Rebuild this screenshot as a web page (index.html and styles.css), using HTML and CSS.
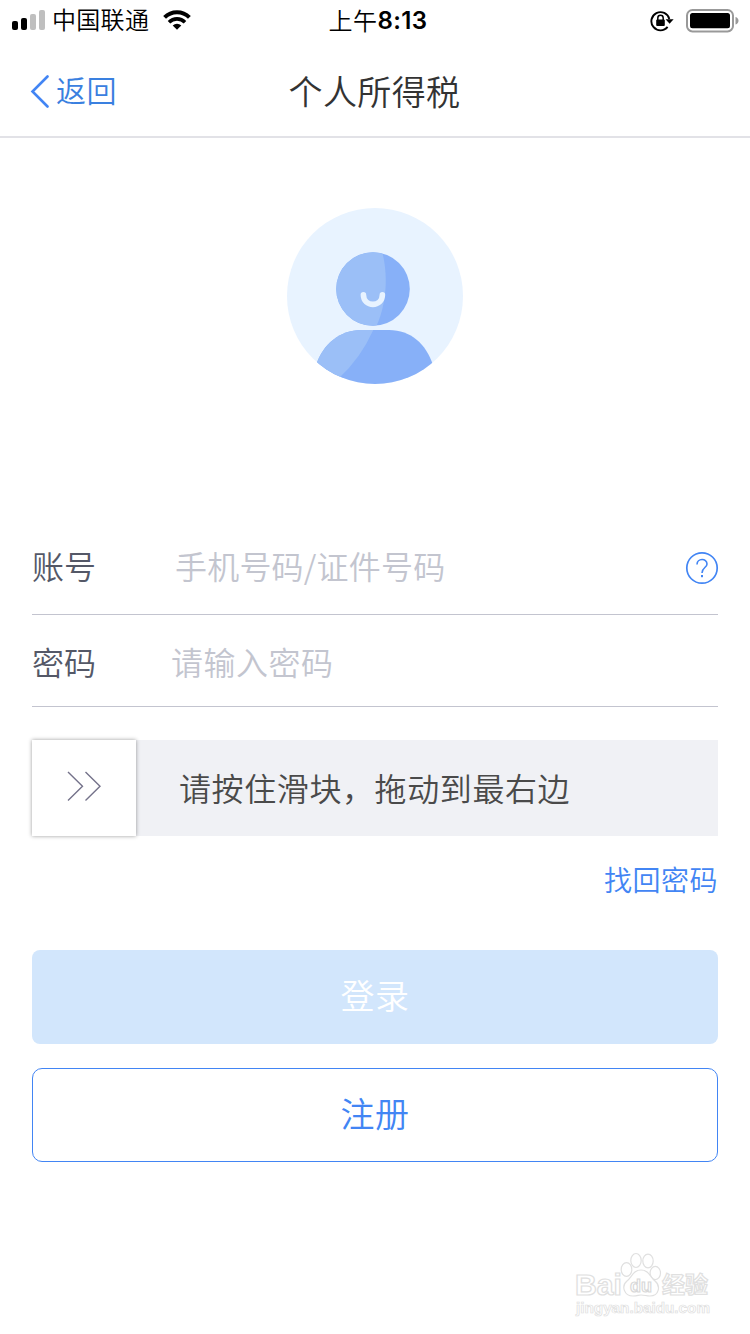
FILE: index.html
```html
<!DOCTYPE html>
<html lang="zh-CN">
<head>
    <meta charset="UTF-8">
    <title>个人所得税</title>
    <link rel="stylesheet" href="styles.css">
</head>
<body>

    <div class="status-bar">
        <div class="status-left">
            <svg class="signal" width="34" height="20" viewBox="0 0 34 20">
                <rect x="0" y="11" width="6" height="9" rx="2" fill="#000"/>
                <rect x="9" y="8" width="6" height="12" rx="2" fill="#000"/>
                <rect x="18" y="4" width="6" height="16" rx="2" fill="#bfbfbf"/>
                <rect x="27" y="0" width="6" height="20" rx="2" fill="#bfbfbf"/>
            </svg>
            <span class="carrier">中国联通</span>
            <svg class="wifi" width="28" height="20" viewBox="0 0 28 20">
                <path d="M1.6 7.3a17.6 17.6 0 0 1 24.8 0" fill="none" stroke="#000" stroke-width="4"/>
                <path d="M6 12.2a11.4 11.4 0 0 1 16 0" fill="none" stroke="#000" stroke-width="3.6"/>
                <path d="M9.7 15.6a6.2 6.2 0 0 1 8.6 0L14 19.8z" fill="#000"/>
            </svg>
        </div>
        <div class="clock">上午<b>8:13</b></div>
        <div class="status-right">
            <svg width="24" height="22" viewBox="0 0 24 22">
                <path d="M17.6 16.9A9.1 9.1 0 1 1 19.3 9" fill="none" stroke="#000" stroke-width="1.9"/>
                <path d="M15.6 9.2h8l-4 4.6z" fill="#000"/>
                <path d="M7.8 10V8a2.7 2.7 0 0 1 5.4 0v2" fill="none" stroke="#000" stroke-width="1.5"/>
                <rect x="6.2" y="9.5" width="8.6" height="6.4" rx="1" fill="#000"/>
            </svg>
            <svg width="53" height="24" viewBox="0 0 53 24">
                <rect x="1" y="1" width="46" height="21.4" rx="5.5" fill="none" stroke="#999" stroke-width="2"/>
                <rect x="4" y="4" width="40" height="15.2" rx="2.5" fill="#000"/>
                <path d="M49.5 8q3 1 3 3.8t-3 3.8z" fill="#999"/>
            </svg>
        </div>
    </div>

    <div class="navbar">
        <a class="back">
            <svg width="20" height="34" viewBox="0 0 20 34">
                <path d="M17.5 2.5L2.5 17.5l15 15" fill="none" stroke="#4285f4" stroke-width="2.6" stroke-linecap="round"/>
            </svg>
            <span>返回</span>
        </a>
        <h1>个人所得税</h1>
        <div class="nav-space"></div>
    </div>

    <div class="content">
        <svg class="avatar" width="176" height="176" viewBox="0 0 176 176">
            <defs>
                <clipPath id="circle"><circle cx="88" cy="88" r="88"/></clipPath>
                <clipPath id="head"><circle cx="86" cy="81" r="36.8"/></clipPath>
                <clipPath id="body"><path d="M29 157C36 136 53 122 74 122H102C124 122 139 136 146 157V180H29z"/></clipPath>
            </defs>
            <circle cx="88" cy="88" r="88" fill="#e8f3ff"/>
            <g clip-path="url(#circle)">
                <g clip-path="url(#head)">
                    <rect x="48" y="43" width="76" height="76" fill="#87b0f8"/>
                    <path d="M40 40H94C101 62 101 93 89 119H40z" fill="#9bbff7"/>
                </g>
                <g clip-path="url(#body)">
                    <rect x="20" y="120" width="140" height="60" fill="#87b0f8"/>
                    <path d="M20 118H88Q75 149 52 170L40 180H20z" fill="#9bbff7"/>
                </g>
            </g>
            <path d="M76.4 86.8C76.4 99.6 95.4 99.6 95.4 86.8" fill="none" stroke="#e8f3ff" stroke-width="5.6" stroke-linecap="round"/>
        </svg>

        <div class="field account">
            <label>账号</label>
            <input type="text" placeholder="手机号码/证件号码">
            <svg width="34" height="34" viewBox="0 0 34 34">
                <circle cx="17" cy="17" r="15.2" fill="none" stroke="#4285f4" stroke-width="1.7"/>
                <path d="M12 13.5C12 7 22 7 22 12.9C22 16.7 17 16.5 17 22" fill="none" stroke="#4285f4" stroke-width="1.6"/>
                <rect x="16" y="24" width="2" height="2.2" fill="#4285f4"/>
            </svg>
        </div>
        <div class="field password">
            <label>密码</label>
            <input type="password" placeholder="请输入密码">
        </div>

        <div class="slider">
            <div class="handle">
                <svg width="36" height="32" viewBox="0 0 36 32">
                    <path d="M2 2l14.5 14.2L2 30.5M19.5 2L34 16.2L19.5 30.5" fill="none" stroke="#74728a" stroke-width="1.4"/>
                </svg>
            </div>
            <span>请按住滑块，拖动到最右边</span>
        </div>

        <a class="forgot">找回密码</a>

        <button class="login">登录</button>
        <button class="register">注册</button>
    </div>

    <svg class="watermark" width="150" height="72" viewBox="0 0 150 72">
        <g class="outline">
            <text class="brand" x="5" y="45" textLength="47" lengthAdjust="spacingAndGlyphs">Bai</text>
            <ellipse cx="56.5" cy="19.5" rx="5.3" ry="6.8"/>
            <ellipse cx="66" cy="10.5" rx="5.2" ry="7"/>
            <ellipse cx="78" cy="11" rx="5.2" ry="6.8"/>
            <ellipse cx="85.3" cy="23" rx="5.2" ry="6.6"/>
            <path d="M71 20C63 20 62 27 57 31C51 36 54 46 63 46C68 46 68 45 71 45C75 45 76 46 80 46C89 46 91 36 85 31C80 27 79 20 71 20z"/>
            <text class="jingyan" x="92" y="43" textLength="46">经验</text>
            <text class="url" x="6" y="62.5" textLength="134" lengthAdjust="spacingAndGlyphs">jingyan.baidu.com</text>
        </g>
        <text class="du" x="60" y="42" textLength="22" lengthAdjust="spacingAndGlyphs">du</text>
    </svg>

</body>
</html>
```
FILE: styles.css
```css
* { box-sizing: border-box; }
body { margin: 0; height: 1334px; position: relative; background: #fff; font-family: "Noto Sans CJK SC", sans-serif; font-weight: 350; overflow: hidden; }

.status-bar { display: grid; grid-template-columns: 1fr auto 1fr; align-items: center; height: 40px; padding: 0 11px 0 12px; font-size: 24px; line-height: 38px; color: #000; }
.status-left { display: flex; align-items: center; }
.carrier { margin-left: 6px; padding-bottom: 2px; letter-spacing: 0.3px; }
.wifi { margin-left: 14px; }
.clock { display: flex; letter-spacing: 0.4px; margin-left: 5px; }
.clock b { padding-top: 1px; font-family: Inter, sans-serif; font-weight: 600; font-size: 24px; }
.status-right { display: flex; justify-content: flex-end; align-items: center; gap: 12px; padding-top: 1px; }

.navbar { display: grid; grid-template-columns: 1fr auto 1fr; align-items: center; height: 98px; padding: 5px 30px 0; border-bottom: 2px solid #e2e2e7; }
.back { display: flex; align-items: center; gap: 6px; font-size: 30px; letter-spacing: 0.5px; line-height: 40px; color: #3a80e0; }
.back span { padding-bottom: 3px; }
.navbar h1 { margin: 0 1px 0 0; font-size: 34px; font-weight: inherit; letter-spacing: 0.4px; line-height: 50px; color: #333; }

.content { display: flex; flex-direction: column; padding: 70px 32px 0; }
.avatar { align-self: center; }

.field { display: flex; align-items: center; border-bottom: 1px solid #c3c4cf; font-size: 32px; }
.account { height: 93px; margin-top: 138px; }
.password { height: 92px; padding-top: 6px; }
.field label { width: 143px; padding-bottom: 6px; color: #545867; }
.password label { width: 139px; }
.field input { flex: 1; min-width: 0; height: 60px; padding: 0 0 6px; border: none; outline: none; background: none; font: inherit; letter-spacing: 0.2px; }
.password input { letter-spacing: 0.5px; }
.field input::placeholder { color: #c3c5cf; opacity: 1; }
.field svg { margin-right: -1px; }

.slider { display: flex; align-items: center; height: 96px; margin-top: 33px; background: #f0f1f5; font-size: 32px; letter-spacing: 0.6px; color: #4a4a4a; }
.slider span { padding-bottom: 2px; }
.handle { display: flex; align-items: center; justify-content: center; width: 104px; height: 96px; padding-bottom: 4px; margin-right: 43px; background: #fff; box-shadow: 0 0 4px rgba(0, 0, 0, 0.4); }

.forgot { align-self: flex-end; margin-top: 23px; font-size: 28px; line-height: 40px; letter-spacing: 0.5px; color: #4285f4; }

button { height: 94px; padding: 0 0 5px; border: none; border-radius: 8px; font-family: inherit; font-weight: inherit; font-size: 34px; letter-spacing: 0.4px; }
.login { margin-top: 51px; background: #d2e6fc; color: #fff; }
.register { margin-top: 24px; border: 1px solid #4285f4; border-radius: 10px; background: #fff; color: #4285f4; }

.watermark { position: absolute; left: 570px; top: 1250px; font-family: "Liberation Sans", "Noto Sans CJK SC", sans-serif; font-weight: 700; }
.outline { fill: #fff; stroke: #e0e0e0; stroke-width: 1.2; }
.brand { font-size: 29px; }
.jingyan { font-size: 23px; }
.url { font-size: 14px; stroke-width: 0.7; }
.du { font-size: 19px; fill: #fff; stroke: #d8d8d8; stroke-width: 1.2; }
```
